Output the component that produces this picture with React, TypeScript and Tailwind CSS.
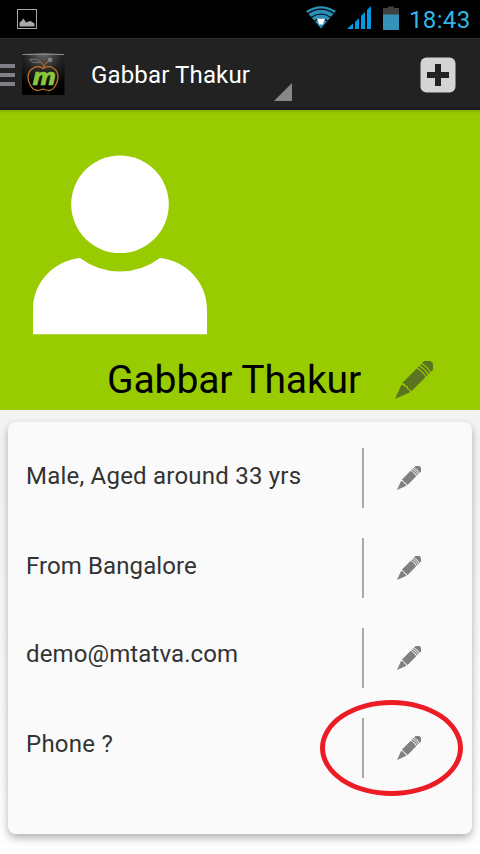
import clsx from 'clsx';

interface DetailRowProps {
  text: string;
  textClass: string;
  highlighted?: boolean;
}

const DETAILS: DetailRowProps[] = [
  { text: 'Male, Aged around 33 yrs', textClass: '-mt-[5px] tracking-[0.22px]' },
  { text: 'From Bangalore', textClass: '-mt-[5px] tracking-[0.1px]' },
  { text: 'demo@mtatva.com', textClass: '-mt-[9px] tracking-[0.12px]' },
  { text: 'Phone ?', textClass: '-mt-[9px] tracking-[0.25px]', highlighted: true },
];

/** Diagonal pencil, drawn flat along the x axis and then turned 45°. */
function PencilIcon({ className }: { className?: string }) {
  return (
    <svg viewBox="0 0 38 38" className={className} fill="currentColor" aria-hidden="true">
      <g transform="translate(0 38) rotate(-45)">
        <path d="M0 0 L14.6 -5.6 Q16.6 -3.5 15.4 -1.7 Q17.6 0 15.4 1.7 Q17 3.5 15.4 5.8 Z" />
        <path d="M16.8 -6.2 H36.8 Q38.8 0 36.8 6.2 H17 Q18.2 3.6 16.8 1.8 Q18.8 0 16.8 -1.8 Q18 -3.6 16.8 -6.2 Z" />
        <path d="M38 -6.2 H40 Q42 0 40 6.2 H38 Q40 0 38 -6.2 Z" />
        <path d="M41.2 -6.2 H43.2 Q45.2 0 43.2 6.2 H41.2 Q43.2 0 41.2 -6.2 Z" />
        <path d="M44.4 -6.2 H47.6 Q52 -5.4 52 0 Q52 5.4 47.6 6.2 H44.4 Q46.4 0 44.4 -6.2 Z" />
      </g>
    </svg>
  );
}

function StatusBar() {
  return (
    <div className="flex h-[38px] shrink-0 items-start bg-black">
      <svg viewBox="0 0 20 20" className="ml-[17px] mt-[9px] h-5 w-5" aria-hidden="true">
        <rect x="0.5" y="0.5" width="19" height="19" fill="none" stroke="#a9a9a9" />
        <path d="M2.5 17.5 V13.5 L5 11.5 L6 9.5 L7.5 11 L9 13.5 L11.5 12.5 L13.5 12 L17.5 14.5 V17.5 Z" fill="#a9a9a9" />
      </svg>
      <svg viewBox="0 0 30 23" className="ml-[269px] mt-[6px] h-[23px] w-[30px]" fill="none" stroke="#2a8fb8" aria-hidden="true">
        <path d="M15 22.5 L0 5 Q15 -4.5 30 5 Z" fill="#2a8fb8" stroke="none" />
        <path d="M1.8 7.6 Q15 -1.2 28.2 7.6" stroke="#000" strokeWidth="1.2" />
        <path d="M5 11.4 Q15 4.6 25 11.4" stroke="#000" strokeWidth="1.2" />
        <path d="M8.4 15 Q15 10.2 21.6 15" stroke="#000" strokeWidth="1.2" />
        <path d="M11 12.5 H19 L16.8 18.5 H13.2 Z" fill="#fff" stroke="none" />
      </svg>
      <svg viewBox="0 0 24 23" className="ml-[11px] mt-[6px] h-[23px] w-6" fill="#0099e5" aria-hidden="true">
        <path d="M0 23 L6 17.6 V23 Z M8 23 V16 L12 12 V23 Z M14 23 V10 L18 6 V23 Z M20 23 V4 L24 0 V23 Z" />
      </svg>
      <svg viewBox="0 0 16 24" className="ml-3 mt-[6px] h-6 w-4" aria-hidden="true">
        <path d="M0 2 H5 V0.5 H11 V2 H16 V9 H0 Z" fill="#404040" />
        <rect y="8.5" width="16" height="15.5" fill="#3592b8" />
      </svg>
      <span className="ml-[10px] mt-[5px] text-[24px] leading-[30px] tracking-[0.35px] text-[#33b5e5]">18:43</span>
    </div>
  );
}

function AppLogo() {
  return (
    <svg viewBox="0 0 43 43" className="-mt-px ml-[7px] h-[43px] w-[43px]" aria-hidden="true">
      <defs>
        <radialGradient id="tile" cx="0.5" cy="0" r="0.85">
          <stop offset="0" stopColor="#686868" />
          <stop offset="0.5" stopColor="#262626" />
          <stop offset="1" stopColor="#000" />
        </radialGradient>
      </defs>
      <rect width="42.5" height="42" rx="1" fill="url(#tile)" />
      <path d="M0.5 1.5 H42" stroke="#888" strokeWidth="1" />
      <path d="M21 15.5 C15 11 6 16 6 24 C6 31 11 37.5 15.5 37.5 C18.5 37.5 19 36.2 21 36.2 C23 36.2 24 37.5 27 37.5 C31.5 37.5 36 30 36 24 C36 16 28 11 21 15.5 Z" fill="none" stroke="#bd722a" strokeWidth="1.3" />
      <path d="M22 15 Q22 11 18.5 9 M22 13.5 Q23 9.5 26.5 8.5" fill="none" stroke="#bd722a" />
      <path d="M18.5 9 Q15 5.5 7.5 6.5 Q10 11 18.5 9" fill="none" stroke="#777" />
      <circle cx="28" cy="6.8" r="2.4" fill="#808080" />
      <text x="10.5" y="31.5" fill="#8ac73e" stroke="#8ac73e" strokeWidth="0.7" fontFamily="Open Sans, sans-serif" fontSize="24" fontWeight="700" fontStyle="italic" textLength="23.5" lengthAdjust="spacingAndGlyphs">m</text>
    </svg>
  );
}

function ActionBar() {
  return (
    <header className="flex h-[72px] shrink-0 items-center border-b-[3px] border-t border-b-[#1a1a1a] border-t-[#303030] bg-[#222222] pt-[3px]">
      <div className="flex w-[15px] flex-col gap-[5px]">
        <div className="h-1 bg-[#7e8086]" />
        <div className="h-1 bg-[#7e8086]" />
        <div className="h-1 bg-[#7e8086]" />
      </div>
      <AppLogo />
      <div className="ml-[26px] flex h-full w-[201px] items-center">
        <h1 className="whitespace-nowrap text-[24px] leading-7 tracking-[0.15px] text-white">Gabbar Thakur</h1>
        <svg viewBox="0 0 18 18" className="mb-[6px] ml-auto h-[18px] w-[18px] self-end" fill="#888" aria-hidden="true">
          <path d="M18 0 V18 H0 Z" />
        </svg>
      </div>
      <button type="button" aria-label="Add" className="ml-auto mr-[24px]">
        <svg viewBox="0 0 36 36" className="h-9 w-9" aria-hidden="true">
          <rect x="0.5" y="0.5" width="35" height="35" rx="6" fill="#d4d4d4" />
          <path d="M15 7 H21 V15 H29 V21 H21 V29 H15 V21 H7 V15 H15 Z" fill="#222" />
        </svg>
      </button>
    </header>
  );
}

function ProfileBanner() {
  return (
    <section className="h-[300px] shrink-0 bg-[#99cc00] shadow-[inset_0_3px_2px_-1px_rgba(0,0,0,0.12)]">
      <svg viewBox="0 0 174 180" className="ml-[33px] h-[225px] w-[174px] pt-[45px]" fill="#fff" aria-hidden="true">
        <circle cx="87" cy="49.3" r="48.8" />
        <path d="M0 179.3 V154 C0 128 20 106 47 103 Q65 116.5 87 116.5 Q109 116.5 127 103 C154 106 174 128 174 154 V179.3 Z" />
      </svg>
      <div className="mt-[19px] flex items-start">
        <h2 className="ml-[107px] mt-px w-[288px] whitespace-nowrap text-[39px] leading-[50px] tracking-[-0.1px] text-black">Gabbar Thakur</h2>
        <PencilIcon className="mt-[7px] h-[38px] w-[38px] text-[#5b7422]" />
      </div>
    </section>
  );
}

function DetailRow({ text, textClass, highlighted }: DetailRowProps) {
  return (
    <li className="relative flex h-[60px] items-center">
      <span className={clsx('w-[336px] whitespace-nowrap text-[24px] leading-7 text-[#333]', textClass)}>{text}</span>
      <div className="h-full w-0.5 bg-[#aaa]" />
      <PencilIcon className="ml-[33px] h-6 w-6 text-[#808080]" />
      {highlighted && (
        <div className="pointer-events-none absolute left-[294px] top-[-18px] h-[96px] w-[143px] rounded-[50%] border-[5px] border-[#ed1c24]" />
      )}
    </li>
  );
}

export default function App() {
  return (
    <div className="flex h-[854px] w-[480px] flex-col overflow-hidden font-['Roboto',sans-serif]">
      <StatusBar />
      <ActionBar />
      <ProfileBanner />
      <main className="flex-1 bg-linear-to-b from-[#f3f3f3] to-white px-2 pt-3">
        <ul className="flex h-[412px] flex-col gap-[30px] rounded-lg bg-[#fafafa] px-[18px] pt-[26px] shadow-[0_4px_8px_rgba(0,0,0,0.3)]">
          {DETAILS.map((row) => (
            <DetailRow key={row.text} {...row} />
          ))}
        </ul>
      </main>
    </div>
  );
}
